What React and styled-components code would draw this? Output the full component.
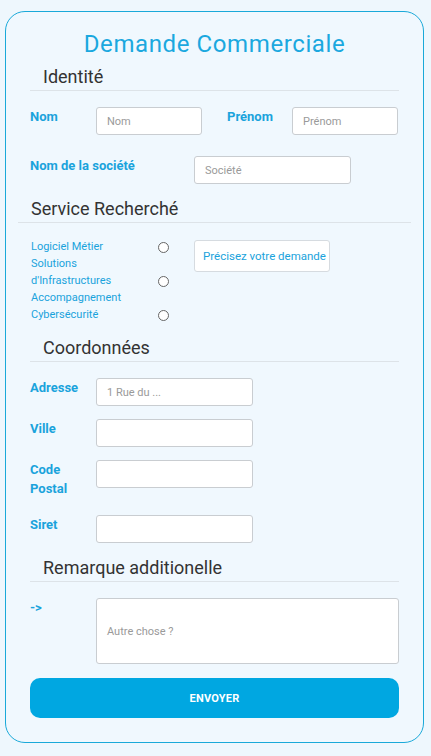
import React from "react";
import styled, { createGlobalStyle } from "styled-components";

const GlobalStyle = createGlobalStyle`
  html, body {
    margin: 0;
    padding: 0;
    background: #eef7fd;
    font-family: Roboto, "Liberation Sans", sans-serif;
  }
  * { box-sizing: border-box; }
`;

const Page = styled.div`
  padding: 11px 7px 13px 5px;
`;

const Card = styled.form`
  border: 1px solid #1aa9d9;
  border-radius: 20px;
  background: #f0f8fe;
  padding: 17px 12px 24px 12px;
  display: flex;
  flex-direction: column;
`;

const Title = styled.h1`
  margin: 0;
  text-align: center;
  font-size: 24px;
  line-height: 30px;
  font-weight: 400;
  color: #1ba8df;
  letter-spacing: 0.6px;
`;

const Section = styled.section`
  padding: 0 ${(p) => (p.$wide ? 0 : 12)}px;
  margin-top: ${(p) => p.$top || 0}px;
`;

const SectionHead = styled.h2`
  margin: 0;
  padding: 0 0 1px 13px;
  font-size: 18px;
  line-height: 24px;
  font-weight: 400;
  color: #333;
  border-bottom: 1px solid #dde3e8;
`;

const Body = styled.div`
  padding-top: 16px;
  display: flex;
  flex-direction: column;
  gap: ${(p) => p.$gap || 13}px;
`;

const Row = styled.div`
  display: flex;
  align-items: flex-start;
`;

const Label = styled.label`
  width: ${(p) => p.$w || 66}px;
  flex-shrink: 0;
  font-size: 13px;
  line-height: 19px;
  font-weight: 700;
  color: #1aa3dc;
  padding-bottom: 4px;
  margin-left: ${(p) => p.$ml || 0}px;
`;

const Input = styled.input`
  width: ${(p) => p.$w || 157}px;
  height: 28px;
  border: 1px solid #c9cdd1;
  border-radius: 3px;
  background: #fff;
  padding: 0 10px;
  font-family: inherit;
  font-size: 11px;
  color: #333;
  &::placeholder { color: #9a9a9a; }
`;

const TextArea = styled.textarea`
  flex: 1;
  height: 66px;
  border: 1px solid #c9cdd1;
  border-radius: 3px;
  background: #fff;
  padding: 26px 10px 0;
  font-family: inherit;
  font-size: 11px;
  resize: none;
  &::placeholder { color: #9a9a9a; }
`;

const ServiceBody = styled.div`
  padding: 15px 13px 0;
  display: flex;
  align-items: flex-start;
`;

const Options = styled.div`
  width: 163px;
  display: flex;
  flex-direction: column;
`;

const Option = styled.div`
  display: flex;
  align-items: flex-end;
`;

const OptionText = styled.span`
  width: 127px;
  font-size: 11px;
  line-height: 17px;
  color: #1aa3dc;
`;

const Radio = styled.input.attrs({ type: "radio" })`
  appearance: none;
  margin: 0 0 2px 0;
  width: 11px;
  height: 11px;
  border: 1px solid #666;
  border-radius: 50%;
  background: #fff;
`;

const AskButton = styled.button`
  margin-top: 2px;
  height: 32px;
  padding: 0 3px 0 8px;
  border: 1px solid #d6dbe0;
  border-radius: 3px;
  background: #fff;
  font-family: inherit;
  font-size: 11.5px;
  color: #1aa3dc;
  white-space: nowrap;
`;

const Submit = styled.button`
  margin: 14px 12px 0;
  height: 40px;
  border: none;
  border-radius: 10px;
  background: #00a7e1;
  color: #fff;
  font-family: inherit;
  font-weight: 700;
  font-size: 11px;
  letter-spacing: 0.2px;
`;

export default function App() {
  return (
    <Page>
      <GlobalStyle />
      <Card onSubmit={(e) => e.preventDefault()}>
        <Title>Demande Commerciale</Title>

        <Section $top={6}>
          <SectionHead>Identité</SectionHead>
          <Body $gap={21}>
            <Row>
              <Label>Nom</Label>
              <Input $w={106} placeholder="Nom" />
              <Label $w={65} $ml={25}>Prénom</Label>
              <Input $w={106} placeholder="Prénom" />
            </Row>
            <Row>
              <Label $w={164}>Nom de la société</Label>
              <Input placeholder="Société" />
            </Row>
          </Body>
        </Section>

        <Section $wide $top={13}>
          <SectionHead>Service Recherché</SectionHead>
          <ServiceBody>
            <Options>
              <Option>
                <OptionText>Logiciel Métier</OptionText>
                <Radio name="service" />
              </Option>
              <Option>
                <OptionText>Solutions d'Infrastructures</OptionText>
                <Radio name="service" />
              </Option>
              <Option>
                <OptionText>Accompagnement</OptionText>
              </Option>
              <Option>
                <OptionText>Cybersécurité</OptionText>
                <Radio name="service" />
              </Option>
            </Options>
            <AskButton type="button">Précisez votre demande</AskButton>
          </ServiceBody>
        </Section>

        <Section $top={13}>
          <SectionHead>Coordonnées</SectionHead>
          <Body>
            <Row>
              <Label>Adresse</Label>
              <Input placeholder="1 Rue du ..." />
            </Row>
            <Row>
              <Label>Ville</Label>
              <Input />
            </Row>
            <Row>
              <Label>Code Postal</Label>
              <Input />
            </Row>
            <Row>
              <Label>Siret</Label>
              <Input />
            </Row>
          </Body>
        </Section>

        <Section $top={13}>
          <SectionHead>Remarque additionelle</SectionHead>
          <Body>
            <Row>
              <Label>-&gt;</Label>
              <TextArea placeholder="Autre chose ?" />
            </Row>
          </Body>
        </Section>

        <Submit type="submit">ENVOYER</Submit>
      </Card>
    </Page>
  );
}
